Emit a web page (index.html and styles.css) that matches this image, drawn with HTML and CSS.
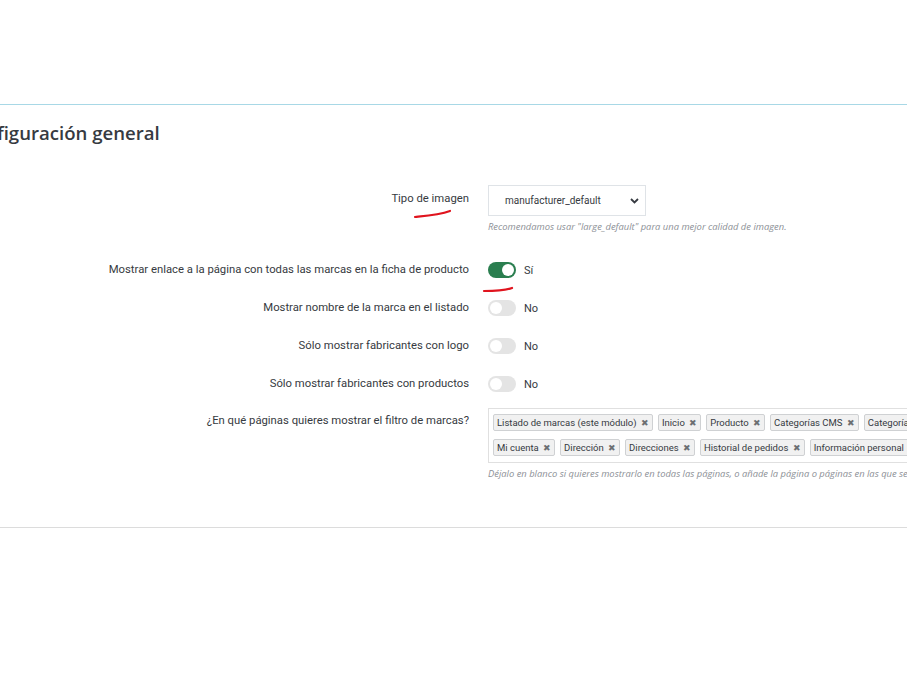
FILE: index.html
```html
<!DOCTYPE html>
<html lang="es">
<head>
    <meta charset="UTF-8">
    <meta name="viewport" content="width=device-width, initial-scale=1.0">
    <title>Configuración general</title>
    <link rel="stylesheet" href="styles.css">
</head>
<body>
    <div class="panel">
        <h3 class="panel-heading">Configuración general</h3>

        <div class="form-body">
            <div class="form-group group-select">
                <label class="control-label">
                    <span class="marked">Tipo de imagen
                        <svg class="mark mark-label" width="40" height="10" viewBox="0 0 40 10">
                            <path d="M2 8 C 12 7, 26 6, 37 2" />
                        </svg>
                    </span>
                </label>
                <div class="control">
                    <div class="select">
                        <span>manufacturer_default</span>
                        <svg class="chevron" width="9" height="6" viewBox="0 0 9 6">
                            <path d="M1 1 L4.5 4.5 L8 1" />
                        </svg>
                    </div>
                    <p class="help">Recomendamos usar "large_default" para una mejor calidad de imagen.</p>
                </div>
            </div>

            <div class="form-group group-switch first-switch">
                <label class="control-label">Mostrar enlace a la página con todas las marcas en la ficha de producto</label>
                <div class="control">
                    <span class="switch on">
                        <svg class="mark mark-switch" width="34" height="10" viewBox="0 0 34 10">
                            <path d="M2 7 C 10 7, 22 7, 30 4" />
                        </svg>
                    </span>
                    <span class="switch-text">Sí</span>
                </div>
            </div>

            <div class="form-group group-switch">
                <label class="control-label">Mostrar nombre de la marca en el listado</label>
                <div class="control">
                    <span class="switch"></span>
                    <span class="switch-text">No</span>
                </div>
            </div>

            <div class="form-group group-switch">
                <label class="control-label">Sólo mostrar fabricantes con logo</label>
                <div class="control">
                    <span class="switch"></span>
                    <span class="switch-text">No</span>
                </div>
            </div>

            <div class="form-group group-switch">
                <label class="control-label">Sólo mostrar fabricantes con productos</label>
                <div class="control">
                    <span class="switch"></span>
                    <span class="switch-text">No</span>
                </div>
            </div>

            <div class="form-group group-tags">
                <label class="control-label">¿En qué páginas quieres mostrar el filtro de marcas?</label>
                <div class="control">
                    <div class="tags">
                        <span class="tag">Listado de marcas (este módulo) <i>✖</i></span>
                        <span class="tag">Inicio <i>✖</i></span>
                        <span class="tag">Producto <i>✖</i></span>
                        <span class="tag">Categorías CMS <i>✖</i></span>
                        <span class="tag">Categorías <i>✖</i></span>
                        <span class="tag">Mi cuenta <i>✖</i></span>
                        <span class="tag">Dirección <i>✖</i></span>
                        <span class="tag">Direcciones <i>✖</i></span>
                        <span class="tag">Historial de pedidos <i>✖</i></span>
                        <span class="tag">Información personal <i>✖</i></span>
                    </div>
                    <p class="help nowrap">Déjalo en blanco si quieres mostrarlo en todas las páginas, o añade la página o páginas en las que se mostrará.</p>
                </div>
            </div>
        </div>
    </div>
</body>
</html>
```

FILE: styles.css
```css
body {
    margin: 0;
    background: #fff;
    font-family: Roboto, "Noto Sans", sans-serif;
    color: #363a41;
    overflow: hidden;
}

.panel {
    margin-top: 104px;
    margin-left: -40px;
    width: 1200px;
    border-top: 1px solid #a8d8e6;
    border-bottom: 1px solid #dcdcdc;
    padding-bottom: 46px;
}

.panel-heading {
    margin: 0;
    padding: 16px 0 0 2px;
    font-family: "Open Sans", sans-serif;
    font-size: 18.6px;
    font-weight: 600;
    line-height: 24px;
    color: #363a41;
}

.form-body {
    margin-top: 40px;
}

.form-group {
    display: flex;
    align-items: flex-start;
}

.control-label {
    width: 528px;
    flex-shrink: 0;
    padding-right: 19px;
    box-sizing: border-box;
    text-align: right;
    font-size: 11.3px;
    line-height: 16px;
}

.control {
    display: flex;
    flex-direction: column;
}

/* select */
.group-select .control-label {
    padding-top: 6px;
}

.marked {
    position: relative;
    display: inline-block;
}

.select {
    width: 158px;
    height: 31px;
    box-sizing: border-box;
    border: 1px solid #dfe3e7;
    display: flex;
    align-items: center;
    justify-content: space-between;
    padding: 0 6px 0 16px;
    font-size: 10px;
}

.chevron path {
    fill: none;
    stroke: #363a41;
    stroke-width: 1.8;
}

.help {
    margin: 4px 0 0;
    font-family: "Open Sans", sans-serif;
    font-style: italic;
    font-size: 9.4px;
    line-height: 14px;
    color: #8c9096;
}

.nowrap {
    white-space: nowrap;
}

/* switches */
.group-switch {
    align-items: center;
    height: 22px;
    margin-top: 16px;
}

.first-switch {
    margin-top: 25px;
}

.group-switch .control {
    flex-direction: row;
    align-items: center;
}

.switch {
    position: relative;
    width: 28px;
    height: 16px;
    border-radius: 8px;
    background: #e4e4e4;
}

.switch::after {
    content: "";
    position: absolute;
    top: 2px;
    left: 2px;
    width: 12px;
    height: 12px;
    border-radius: 50%;
    background: #fff;
}

.switch.on {
    background: #2a7e4f;
}

.switch.on::after {
    left: 14px;
}

.switch-text {
    margin-left: 8px;
    font-size: 11px;
}

/* red underline marks */
.mark {
    position: absolute;
    overflow: visible;
}

.mark path {
    fill: none;
    stroke: #e0141e;
    stroke-width: 2.2;
    stroke-linecap: round;
}

.mark-label {
    left: 22px;
    top: 18px;
}

.mark-switch {
    left: -6px;
    top: 22px;
}

/* tags input */
.group-tags {
    margin-top: 13px;
}

.group-tags .control-label {
    padding-top: 5px;
}

.tags {
    width: 490px;
    height: 55px;
    box-sizing: border-box;
    border: 1px solid #e0e0e0;
    padding: 5px 4px 0 4px;
    display: flex;
    flex-wrap: wrap;
    align-content: flex-start;
    gap: 8px 5px;
    overflow: hidden;
}

.tag {
    height: 17px;
    box-sizing: border-box;
    border: 1px solid #cfd1d3;
    border-radius: 2px;
    background: #f1f1f1;
    padding: 0 3px;
    font-size: 9.5px;
    line-height: 15px;
    white-space: nowrap;
}

.tag i {
    font-style: normal;
    font-size: 9px;
    color: #6c6f73;
    margin-left: 2px;
}

.group-tags .help {
    margin-top: 4px;
}
```
